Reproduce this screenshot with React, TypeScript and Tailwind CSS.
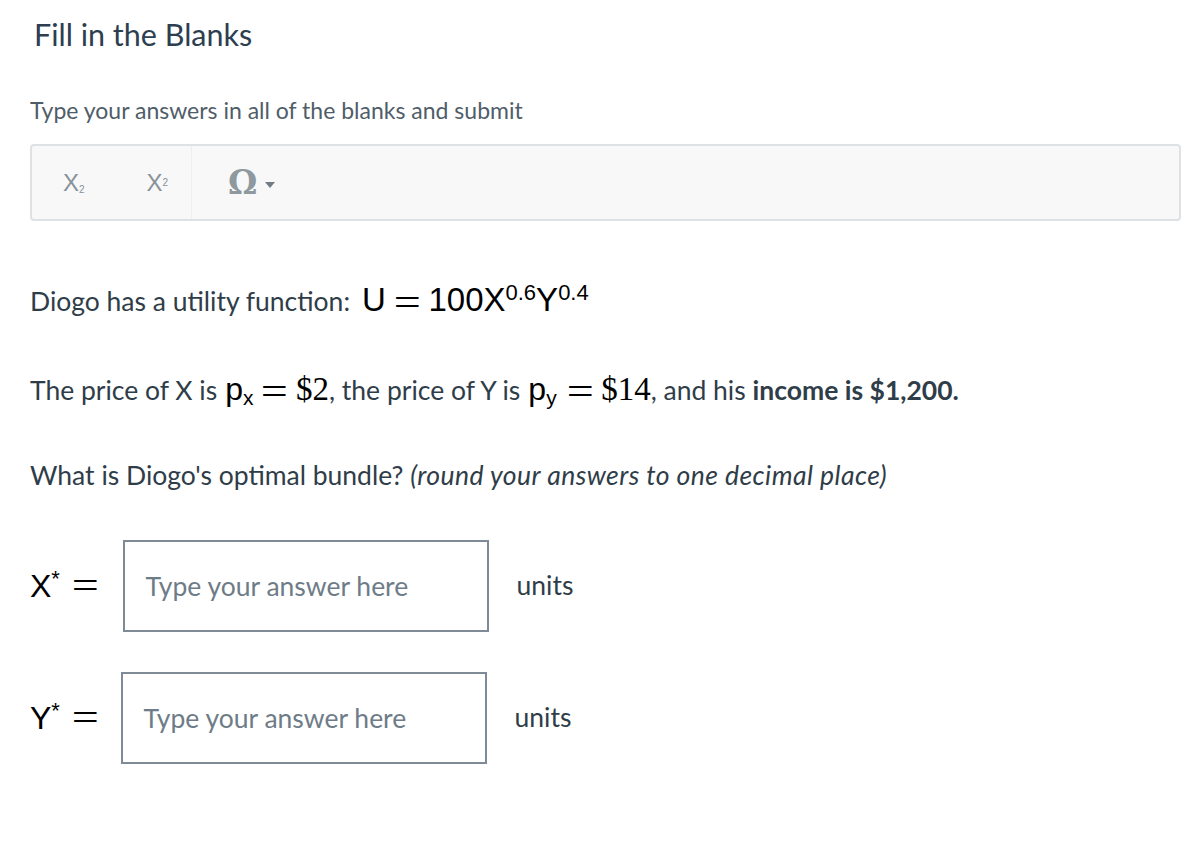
const mathSans = { fontFamily: '"Liberation Sans", Arial, sans-serif' };

function Eq({ className = "mx-[10px] translate-y-[5px]" }: { className?: string }) {
  return (
    <span
      className={`inline-block scale-x-[1.2] font-['Liberation_Serif',serif] text-[40px] leading-none text-black ${className}`}
    >
      =
    </span>
  );
}

function Blank({ label, shift }: { label: string; shift: string }) {
  return (
    <div className="flex items-center">
      <span className="text-[32px] leading-none text-black" style={mathSans}>
        {label}
        <sup className="text-[22px]">*</sup>
      </span>
      <Eq className={`ml-[14px] ${shift}`} />
      <input
        className="h-[92px] w-[366px] border-2 border-[#7e8b96] bg-white px-[20px] text-[26.5px] text-[#2f3d49] placeholder:text-[#6e7c87] outline-none"
        placeholder="Type your answer here"
      />
      <span className="ml-[27px] text-[26.5px] text-[#2f3d49]">units</span>
    </div>
  );
}

export default function App() {
  return (
    <div className="min-h-screen bg-white pl-[30px] pr-[20px] font-['Lato',sans-serif] text-[#2f3d49]">
      <h1 className="pt-[14px] pl-[4px] text-[30.5px] leading-[40px] text-[#2c3e50]">Fill in the Blanks</h1>

      <p className="mt-[41px] text-[23px] leading-[30px] text-[#4f5d69]">
        Type your answers in all of the blanks and submit
      </p>

      {/* toolbar */}
      <div className="mt-[19px] flex h-[77px] w-[1151px] items-center rounded-[4px] border-2 border-[#dfe2e5] bg-[#f8f8f8]">
        <div className="flex h-full w-[160px] items-center border-r border-[#eeeeee] pl-[31px]">
          <span className="text-[24px] text-[#87929b]" style={mathSans}>
            X<sub className="text-[10px]">2</sub>
          </span>
          <span className="ml-[62px] text-[24px] text-[#87929b]" style={mathSans}>
            X<sup className="text-[10px]">2</sup>
          </span>
        </div>
        <div className="flex items-center pl-[36px]">
          <span className="font-['DejaVu_Serif',serif] text-[33px] font-bold text-[#8d989f]">Ω</span>
          <svg width="10" height="6" viewBox="0 0 10 6" className="ml-[8px] mt-[4px]">
            <path d="M0 0h10L5 6z" fill="#717c85" />
          </svg>
        </div>
      </div>

      <p className="mt-[54px] flex h-[40px] items-baseline text-[26.5px]">
        <span>Diogo has a utility function:</span>
        <span className="ml-[12px] flex items-baseline text-[33px] text-black" style={mathSans}>
          U<Eq className="ml-[10px] mr-[10px] translate-y-[5px]" />100X<sup className="text-[22px]">0.6</sup>Y
          <sup className="text-[22px]">0.4</sup>
        </span>
      </p>

      <p className="mt-[50px] flex h-[40px] items-baseline text-[26.5px]">
        <span>The price of X is</span>
        <span className="ml-[8px] flex items-baseline text-[32px] text-black" style={mathSans}>
          p<sub className="text-[21px]">x</sub>
          <Eq />
          <span className="font-['Liberation_Serif',serif] text-[33px]">$2</span>
        </span>
        <span>, the price of Y is</span>
        <span className="ml-[8px] flex items-baseline text-[32px] text-black" style={mathSans}>
          p<sub className="text-[21px]">y</sub>
          <Eq className="ml-[12px] mr-[10px] translate-y-[5px]" />
          <span className="font-['Liberation_Serif',serif] text-[33px]">$14</span>
        </span>
        <span>, and his&nbsp;</span>
        <strong className="font-bold">income is $1,200.</strong>
      </p>

      <p className="mt-[50px] text-[26.5px] leading-[40px]">
        What is Diogo's optimal bundle?{" "}
        <em className="italic tracking-[0.45px]">(round your answers to one decimal place)</em>
      </p>

      <div className="mt-[45px] flex flex-col gap-[40px]">
        <Blank label="X" shift="mr-[27px]" />
        <Blank label="Y" shift="mr-[25px]" />
      </div>
    </div>
  );
}
